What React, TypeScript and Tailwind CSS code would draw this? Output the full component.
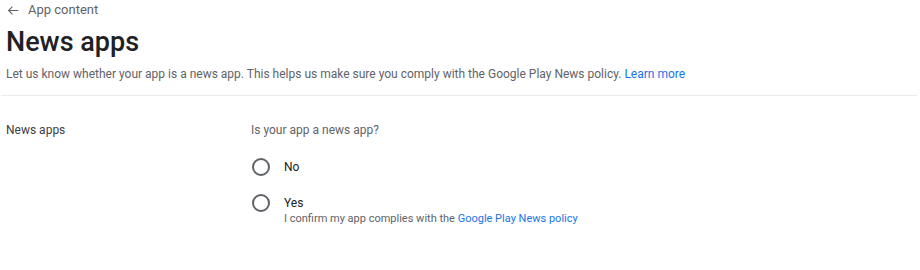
import React from "react";

function RadioOption({ label, children }: { label: string; children?: React.ReactNode }) {
  return (
    <label className="flex items-start gap-[14px]">
      <span className="mt-[-1px] h-[18px] w-[18px] shrink-0 rounded-full border-2 border-[#5f6368] bg-white" />
      <span className="flex flex-col">
        <span className="text-[12px] leading-[16px] text-[#202124]">{label}</span>
        {children}
      </span>
    </label>
  );
}

export default function App() {
  return (
    <div className="min-h-[270px] w-[920px] bg-white font-['Roboto',sans-serif] text-[#202124]">
      <div className="px-[6px] pt-[2px]">
        {/* Back link */}
        <div className="flex items-center gap-[8px] text-[13px] leading-[16px] text-[#5f6368]">
          <svg width="13" height="13" viewBox="0 0 24 24" fill="none" className="ml-[1px]">
            <path d="M21 12H4M10 5l-7 7 7 7" stroke="#5f6368" strokeWidth="2" />
          </svg>
          <span>App content</span>
        </div>

        <h1 className="mt-[8px] text-[27px] font-medium leading-[32px] text-[#202124]">
          News apps
        </h1>

        <p className="mt-[8px] text-[12px] leading-[16px] text-[#5f6368]">
          Let us know whether your app is a news app. This helps us make sure you comply with the Google
          Play News policy. <span className="text-[#1a73e8]">Learn more</span>
        </p>
      </div>

      <div className="ml-[1px] mr-[3px] mt-[13px] h-px bg-[#e8eaed]" />

      <div className="mt-[26px] flex px-[6px]">
        <div className="w-[245px] text-[12px] leading-[16px] text-[#3c4043]">News apps</div>
        <div className="flex flex-col">
          <div className="text-[12px] leading-[16px] text-[#5f6368]">Is your app a news app?</div>
          <div className="mt-[21px] flex flex-col gap-[19px] pl-[1px]">
            <RadioOption label="No" />
            <RadioOption label="Yes">
              <span className="mt-[1px] text-[11px] leading-[14px] text-[#5f6368]">
                I confirm my app complies with the{" "}
                <span className="text-[#1a73e8]">Google Play News policy</span>
              </span>
            </RadioOption>
          </div>
        </div>
      </div>
    </div>
  );
}
